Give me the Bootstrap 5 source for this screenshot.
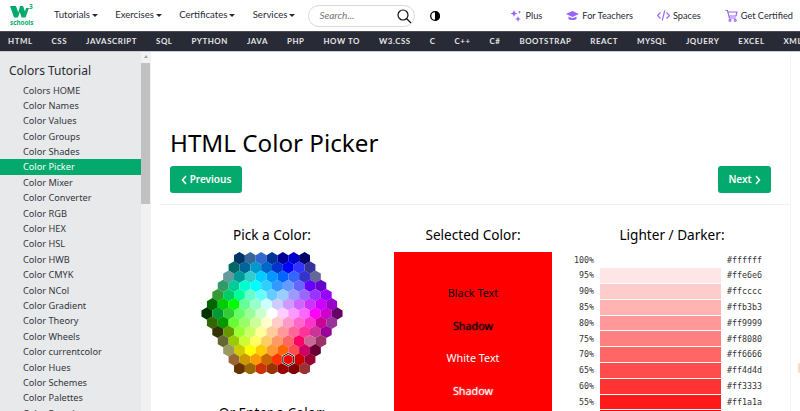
<!DOCTYPE html>
<html lang="en">
  <head>
    <meta charset="UTF-8" />
    <title>HTML Color Picker</title>
    <link href="https://cdn.jsdelivr.net/npm/bootstrap@5.3.3/dist/css/bootstrap.min.css" rel="stylesheet" />
    <style>
      html, body { height: 411px; overflow: hidden; }
      body { font-family: "Noto Sans", "Open Sans", sans-serif; color: #000; background: #fff; }
      .top-bar { height: 31px; padding: 0 7px 0 10px; }
      .w3-logo { width: 24px; height: 26px; margin-right: 20px; flex: none; }
      .top-link { font-family: Lato, "Noto Sans", sans-serif; font-size: 9.6px; color: #282a35; text-decoration: none; white-space: nowrap; }
      .top-left { gap: 17.3px; }
      .caret-down { display: inline-block; border: 3px solid transparent; border-top: 3.5px solid #282a35; border-bottom: 0; margin-left: 2px; vertical-align: 1px; }
      .search-box { width: 107px; height: 22px; border: 1px solid #d9d9d9; border-radius: 11px; padding: 0 2px 0 10px; margin-left: 13px; font-family: Lato, sans-serif; font-size: 10px; font-style: italic; color: #757575; flex: none; }
      .theme-btn { width: 10px; height: 10px; margin-left: 15px; flex: none; }
      .top-right { gap: 24px; margin-left: auto; }
      .top-right .top-link { font-size: 9.2px; }
      .top-right svg { width: 13px; height: 13px; margin-right: 3px; }
      .dark-bar { height: 21px; background: #282a35; border-top: 1px solid #4a4c57; border-bottom: 1px solid #c9cacd; gap: 19px; padding-left: 8px; overflow: hidden; }
      .dark-bar a { font-family: Lato, "Noto Sans", sans-serif; color: #e5e6e8; font-size: 7.9px; font-weight: 700; letter-spacing: .55px; text-decoration: none; white-space: nowrap; }
      .page-wrap { height: 359px; overflow: hidden; }
      .side-col { width: 151px; flex: none; background: #e7e9eb; }
      .side-list { width: 141px; flex: none; padding-top: 10px; overflow: hidden; }
      .side-list h2 { font-size: 12px; font-weight: 400; margin: 0 0 2.5px 9px; line-height: 18px; color: #282a35; }
      .side-list a { display: block; height: 15.4px; line-height: 15.4px; padding-left: 23px; font-size: 9.2px; color: #33363d; text-decoration: none; white-space: nowrap; }
      .side-list a.current { background: #04aa6d; color: #fff; }
      .fake-scroll { width: 10px; background: #f1f1f1; }
      .fake-arrow { height: 8px; }
      .fake-arrow::after { content: ""; display: block; margin: 3px auto 0; width: 0; border: 2.5px solid transparent; border-bottom: 3px solid #a3a3a3; border-top: 0; }
      .fake-thumb { height: 141px; background: #c1c1c1; margin: 0 1px 0 0; }
      .main-col { width: 640px; flex: none; padding: 0 19px; border-right: 1px solid #f5f5f5; }
      .page-title { font-size: 24.2px; font-weight: 400; margin: 73px 0 0; line-height: 35px; height: 41px; }
      .pager { height: 39px; margin: 0 -19px 0 -10px; padding: 0 19px 0 10px; border-bottom: 1px solid #f1f1f1; }
      .green-btn { background: #04aa6d; color: #fff; font-size: 10px; font-weight: 600; border-radius: 3px; height: 27px; padding: 0; border: 0; gap: 3px; }
      .green-btn:hover { background: #04aa6d; color: #fff; }
      .btn-prev { width: 72px; }
      .btn-next { width: 53px; }
      .tool-row { padding-top: 21px; }
      .tool-row h3 { font-size: 13.6px; font-weight: 400; text-align: center; margin: 0; line-height: 18px; height: 26px; }
      .pick-col { width: 224px; flex: none; margin: 0 10px 0 -10px; }
      .pick-col svg { display: block; margin: 0 auto; }
      .under-map { margin-top: 30px !important; }
      .sel-col { width: 158px; flex: none; margin-right: 20px; }
      .sel-box { height: 200px; background: #f00; text-align: center; font-size: 10.8px; line-height: 32.6px; padding-top: 25px; }
      .sel-box div { height: 32.6px; }
      .txt-shadow-dark { color: #000; text-shadow: 0 0 2px rgba(0,0,0,.6); }
      .txt-white { color: #fff; }
      .txt-shadow-light { color: #fff; text-shadow: 0 0 2px rgba(255,255,255,.6); }
      .shade-col { width: 200px; flex: none; }
      .shade-row { height: 15.8px; align-items: center; font-family: "DejaVu Sans Mono", monospace; font-size: 8.3px; color: #333; }
      .shade-pct { width: 22px; text-align: right; margin-right: 6px; }
      .shade-bar { width: 121px; height: 14.8px; margin-right: 6px; }
      .edge-col { flex: 1; padding-top: 311px; }
      .edge-mark { width: 2px; height: 10px; margin-left: auto; background: #f3dcc0; border-radius: 2px 0 0 2px; }
    </style>
  </head>
  <body>
    <div class="top-bar d-flex align-items-center">
      <svg class="w3-logo" viewBox="0 0 24 26">
        <path fill="#04aa6d" d="M0 3h6l2.200 6.500L10 3h3l2 5.500L16 5h3l-3.500 9.500h-4L9.800 9 8 14.500H4z" />
        <text x="19" y="6" font-size="6.500" font-weight="700" fill="#04aa6d" font-family="Noto Sans">3</text>
        <text x="0" y="22" font-size="6.300" font-weight="700" fill="#04aa6d" font-family="Noto Sans">schools</text>
      </svg>
      <div class="top-left d-flex align-items-center">
        <a class="top-link" href="#">Tutorials<span class="caret-down"></span></a>
        <a class="top-link" href="#">Exercises<span class="caret-down"></span></a>
        <a class="top-link" href="#">Certificates<span class="caret-down"></span></a>
        <a class="top-link" href="#">Services<span class="caret-down"></span></a>
      </div>
      <div class="search-box d-flex align-items-center justify-content-between">
        <span>Search...</span>
        <svg width="16" height="16" viewBox="0 0 16 16" fill="none" stroke="#111" stroke-width="1.200"><circle cx="7" cy="7" r="5" /><path d="M10.500 10.500l4.500 4.500" /></svg>
      </div>
      <svg class="theme-btn" viewBox="0 0 10 10"><circle cx="5" cy="5" r="4.300" fill="#fff" stroke="#000" stroke-width="1.300" /><path d="M5 0a5 5 0 0 1 0 10z" fill="#000" /></svg>
      <div class="top-right d-flex align-items-center">
        <a class="top-link d-flex align-items-center" href="#"><svg viewBox="0 0 13 13" fill="#9763f6"><path d="M4 1l1 2.500 2.500 1-2.500 1L4 8 3 5.500l-2.500-1L3 3.500zM9.500 1.500l.5 1 1 .5-1 .5-.5 1-.5-1-1-.5 1-.5zM8 7l.8 2.200 2.200.8-2.200.8L8 13l-.8-2.200L5 10l2.200-.8z" /></svg>Plus</a>
        <a class="top-link d-flex align-items-center" href="#"><svg viewBox="0 0 13 13" fill="#9763f6"><path d="M6.500 2L0 5l6.500 3L13 5zM2.500 7.400V10c1.300 1.300 6.700 1.300 8 0V7.400L6.500 9.200z" /></svg>For Teachers</a>
        <a class="top-link d-flex align-items-center" href="#"><svg viewBox="0 0 13 13" fill="none" stroke="#9763f6" stroke-width="1.100"><path d="M3.500 3.500L.5 6.500l3 3M9.500 3.500l3 3-3 3M7.800 1.500L5.200 11.500" /></svg>Spaces</a>
        <a class="top-link d-flex align-items-center" href="#"><svg viewBox="0 0 13 13" fill="none" stroke="#9763f6" stroke-width="1.100"><path d="M.5 1.500h2l1.800 7.500h6.500M3 3h9l-1 4H4" /><circle cx="5" cy="11.300" r="1" /><circle cx="10.200" cy="11.300" r="1" /></svg>Get Certified</a>
      </div>
    </div>

    <div class="dark-bar d-flex align-items-center">
      <a href="#">HTML</a><a href="#">CSS</a><a href="#">JAVASCRIPT</a><a href="#">SQL</a><a href="#">PYTHON</a><a href="#">JAVA</a><a href="#">PHP</a><a href="#">HOW TO</a><a href="#">W3.CSS</a><a href="#">C</a><a href="#">C++</a><a href="#">C#</a><a href="#">BOOTSTRAP</a><a href="#">REACT</a><a href="#">MYSQL</a><a href="#">JQUERY</a><a href="#">EXCEL</a><a href="#">XML</a>
    </div>

    <div class="page-wrap d-flex">
      <div class="side-col d-flex">
        <div class="side-list">
          <h2>Colors Tutorial</h2>
          <a href="#">Colors HOME</a>
          <a href="#">Color Names</a>
          <a href="#">Color Values</a>
          <a href="#">Color Groups</a>
          <a href="#">Color Shades</a>
          <a href="#" class="current">Color Picker</a>
          <a href="#">Color Mixer</a>
          <a href="#">Color Converter</a>
          <a href="#">Color RGB</a>
          <a href="#">Color HEX</a>
          <a href="#">Color HSL</a>
          <a href="#">Color HWB</a>
          <a href="#">Color CMYK</a>
          <a href="#">Color NCol</a>
          <a href="#">Color Gradient</a>
          <a href="#">Color Theory</a>
          <a href="#">Color Wheels</a>
          <a href="#">Color currentcolor</a>
          <a href="#">Color Hues</a>
          <a href="#">Color Schemes</a>
          <a href="#">Color Palettes</a>
          <a href="#">Color Brands</a>
        </div>
        <div class="fake-scroll">
          <div class="fake-arrow"></div>
          <div class="fake-thumb"></div>
        </div>
      </div>

      <div class="main-col">
        <h1 class="page-title">HTML Color Picker</h1>
        <div class="pager d-flex justify-content-between align-items-start">
          <a class="btn green-btn btn-prev d-flex align-items-center justify-content-center" href="#"><svg width="6" height="10" viewBox="0 0 6 10" fill="none" stroke="#fff" stroke-width="1.500"><path d="M5 1L1.500 5 5 9" /></svg>Previous</a>
          <a class="btn green-btn btn-next d-flex align-items-center justify-content-center" href="#">Next<svg width="6" height="10" viewBox="0 0 6 10" fill="none" stroke="#fff" stroke-width="1.500"><path d="M1 1l3.500 4L1 9" /></svg></a>
        </div>
        <div class="tool-row d-flex">
          <div class="pick-col">
            <h3>Pick a Color:</h3>
            <svg id="hexMap" width="142" height="122" viewBox="0 0 142 122"></svg>
            <h3 class="under-map">Or Enter a Color:</h3>
          </div>
          <div class="sel-col">
            <h3>Selected Color:</h3>
            <div class="sel-box">
              <div>Black Text</div>
              <div class="txt-shadow-dark">Shadow</div>
              <div class="txt-white">White Text</div>
              <div class="txt-shadow-light">Shadow</div>
            </div>
          </div>
          <div class="shade-col">
            <h3>Lighter / Darker:</h3>
            <div id="shadeList"></div>
          </div>
        </div>
      </div>
      <div class="edge-col"><div class="edge-mark"></div></div>
    </div>

    <script>
      const rows = [
        '003366 336699 3366CC 003399 000099 0000CC 000066',
        '006666 006699 0099CC 0066CC 0033CC 0000FF 3333FF 333399',
        '669999 009999 33CCCC 00CCFF 0099FF 0066FF 3366FF 3333CC 666699',
        '339966 00CC99 00FFCC 00FFFF 33CCFF 3399FF 6699FF 6666FF 6600FF 6600CC',
        '339933 00CC66 00FF99 66FFCC 66FFFF 66CCFF 99CCFF 9999FF 9966FF 9933FF 9900FF',
        '006600 00CC00 00FF00 66FF99 99FFCC CCFFFF CCCCFF CC99FF CC66FF CC33FF CC00FF 9900CC',
        '003300 009933 33CC33 66FF66 99FF99 CCFFCC FFFFFF FFCCFF FF99FF FF66FF FF00FF CC00CC 660066',
        '336600 009900 66FF33 99FF66 CCFF99 FFFFCC FFCCCC FF99CC FF66CC FF33CC CC0099 993399',
        '333300 669900 99FF33 CCFF66 FFFF99 FFCC99 FF9999 FF6699 FF3399 CC3399 990099',
        '666633 99CC00 CCFF33 FFFF66 FFCC66 FF9966 FF6666 FF0066 CC6699 993366',
        '999966 CCCC00 FFFF00 FFCC00 FF9933 FF6600 FF5050 CC0066 660033',
        '996633 CC9900 FF9900 CC6600 FF3300 FF0000 CC0000 990033',
        '663300 996600 CC3300 993300 990000 800000 993333'
      ];
      const pitchX = 10.85, pitchY = 9.2, halfW = 5.43, halfH = 6.2;
      let hexHtml = '', selected = '';
      rows.forEach((row, r) => {
        const cells = row.split(' ');
        const startX = 71 - (cells.length - 1) * pitchX / 2;
        const cy = 6.3 + r * pitchY;
        cells.forEach((c, i) => {
          const cx = startX + i * pitchX;
          const pts = [[0,-halfH],[halfW,-halfH/2],[halfW,halfH/2],[0,halfH],[-halfW,halfH/2],[-halfW,-halfH/2]]
            .map(p => (cx + p[0]).toFixed(2) + ',' + (cy + p[1]).toFixed(2)).join(' ');
          hexHtml += `<polygon points="${pts}" fill="#${c}"/>`;
          if (c === 'FF0000') {
            selected = `<polygon points="${pts}" fill="#${c}" stroke="#fff" stroke-width="2"/><polygon points="${pts}" fill="none" stroke="#000" stroke-width="1"/>`;
          }
        });
      });
      document.getElementById('hexMap').innerHTML = hexHtml + selected;

      const shades = [
        ['100%', 'ffffff'], ['95%', 'ffe6e6'], ['90%', 'ffcccc'], ['85%', 'ffb3b3'], ['80%', 'ff9999'],
        ['75%', 'ff8080'], ['70%', 'ff6666'], ['65%', 'ff4d4d'], ['60%', 'ff3333'], ['55%', 'ff1a1a'],
        ['50%', 'ff0000']
      ];
      document.getElementById('shadeList').innerHTML = shades.map(s =>
        `<div class="shade-row d-flex"><span class="shade-pct">${s[0]}</span><span class="shade-bar" style="background:#${s[1]}"></span><span>#${s[1]}</span></div>`
      ).join('');
    </script>
    <script src="https://cdn.jsdelivr.net/npm/bootstrap@5.3.3/dist/js/bootstrap.bundle.min.js"></script>
  </body>
</html>
